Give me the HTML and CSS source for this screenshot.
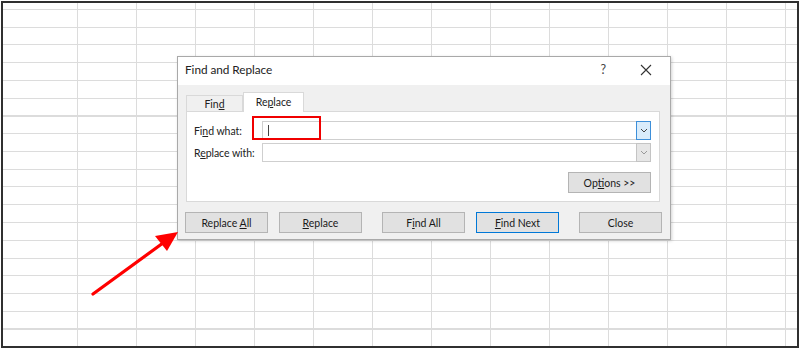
FILE: index.html
```html
<!DOCTYPE html>
<html>
<head>
<meta charset="utf-8">
<link rel="stylesheet" href="styles.css">
</head>
<body>
<div class="sheet">
  <div class="dialog">
    <div class="titlebar">
      <span class="title">Find and Replace</span>
      <span class="help">?</span>
      <svg class="close-x" width="12" height="12" viewBox="0 0 12 12"><path d="M1 1L11 11M11 1L1 11" stroke="#333" stroke-width="1.1" fill="none"/></svg>
    </div>
    <div class="dbody">
      <div class="tabs">
        <div class="tab">Fin<u>d</u></div>
        <div class="tab active">Re<u>p</u>lace</div>
      </div>
      <div class="panel">
        <div class="row">
          <label class="lbl">Fi<u>n</u>d what:</label>
          <div class="combo">
            <div class="field"><span class="caret"></span></div>
            <div class="drop active"><svg width="8" height="5" viewBox="0 0 8 5"><path d="M1 1L4 4L7 1" stroke="#444" stroke-width="1" fill="none"/></svg></div>
          </div>
        </div>
        <div class="row row2">
          <label class="lbl">R<u>e</u>place with:</label>
          <div class="combo">
            <div class="field"></div>
            <div class="drop"><svg width="8" height="5" viewBox="0 0 8 5"><path d="M1 1L4 4L7 1" stroke="#999" stroke-width="1" fill="none"/></svg></div>
          </div>
        </div>
        <div class="optrow">
          <button class="btn">Op<u>t</u>ions &gt;&gt;</button>
        </div>
      </div>
      <div class="buttons">
        <button class="btn">Replace <u>A</u>ll</button>
        <button class="btn gap1"><u>R</u>eplace</button>
        <button class="btn gap2">F<u>i</u>nd All</button>
        <button class="btn gap1 primary"><u>F</u>ind Next</button>
        <button class="btn gap2">Close</button>
      </div>
    </div>
  </div>
  <div class="redbox"></div>
  <svg class="arrow" width="800" height="350" viewBox="0 0 800 350">
    <line x1="93" y1="294" x2="163" y2="243" stroke="#ff0000" stroke-width="3.2" stroke-linecap="round"/>
    <polygon points="178,232 155,236 167,251" fill="#ff0000"/>
  </svg>
</div>
</body>
</html>
```

FILE: styles.css
```css
html, body {
  margin: 0;
  padding: 0;
  background: #fff;
}
body {
  font-family: Lato, "Noto Sans", sans-serif;
  font-size: 10.5px;
  letter-spacing: -0.05px;
  color: #1a1a1a;
}
.sheet {
  position: relative;
  margin: 1px;
  width: 794px;
  height: 343px;
  border: 2px solid #303030;
  background-color: #fff;
  background-image:
    repeating-linear-gradient(to right, #dcdcdc 0 1px, transparent 1px 59px),
    repeating-linear-gradient(to bottom, #dcdcdc 0 1px, transparent 1px 17.75px);
  background-repeat: no-repeat;
  background-position: 74px 0, 0 6px;
  background-size: calc(100% - 74px) 100%, 100% calc(100% - 6px);
  overflow: hidden;
}
.dialog {
  position: absolute;
  left: 174px;
  top: 53px;
  width: 492px;
  height: 182px;
  border: 1px solid #a9a9a9;
  background: #f0f0f0;
  box-shadow: 1px 1px 3px rgba(0,0,0,0.18);
  display: flex;
  flex-direction: column;
}
.titlebar {
  height: 28px;
  box-sizing: border-box;
  padding-bottom: 3px;
  background: #fff;
  display: flex;
  align-items: center;
  padding-left: 7px;
}
.title {
  font-size: 11.8px;
  color: #222;
  flex: 1;
}
.help {
  font-size: 12.5px;
  color: #444;
  margin-right: 34px;
}
.close-x {
  margin-right: 18px;
}
.dbody {
  flex: 1;
  padding: 7px 0 0 8px;
  display: flex;
  flex-direction: column;
}
.tabs {
  display: flex;
  align-items: flex-end;
  height: 19px;
  position: relative;
  z-index: 1;
}
.tab {
  width: 57px;
  height: 16px;
  box-sizing: border-box;
  border: 1px solid #d9d9d9;
  border-bottom: none;
  background: #f0f0f0;
  text-align: center;
  line-height: 16px;
  color: #222;
}
.tab.active {
  width: 61px;
  height: 20px;
  background: #fff;
  margin-bottom: -1px;
  line-height: 18px;
}
.panel {
  width: 474px;
  height: 91px;
  box-sizing: border-box;
  border: 1px solid #d9d9d9;
  background: #fff;
  padding: 9px 8px 0 7px;
  display: flex;
  flex-direction: column;
}
.row {
  display: flex;
  align-items: center;
  height: 19px;
}
.row2 {
  margin-top: 3px;
}
.lbl {
  width: 68px;
  white-space: nowrap;
  color: #222;
}
.combo {
  flex: 1;
  display: flex;
  height: 19px;
  box-sizing: border-box;
  border: 1px solid #cfcfcf;
  background: #fff;
}
.field {
  flex: 1;
  position: relative;
}
.caret {
  position: absolute;
  left: 5px;
  top: 3px;
  width: 1px;
  height: 11px;
  background: #444;
}
.drop {
  width: 15px;
  margin: -1px -1px -1px 0;
  box-sizing: border-box;
  border: 1px solid #c4c4c4;
  background: #e6e6e6;
  display: flex;
  align-items: center;
  justify-content: center;
}
.drop.active {
  border-color: #3d8fd9;
  background: #d9ecfb;
}
.optrow {
  display: flex;
  justify-content: flex-end;
  margin-top: 10px;
}
.btn {
  width: 83px;
  height: 21px;
  box-sizing: border-box;
  border: 1px solid #b4b4b4;
  background: #e1e1e1;
  font-family: inherit;
  font-size: 10.5px;
  color: #1a1a1a;
  padding: 0;
  line-height: 18px;
}
.btn.primary {
  border-color: #0078d7;
}
.buttons {
  display: flex;
  margin-top: 10px;
  margin-left: -1px;
}
.gap1 { margin-left: 11px; }
.gap2 { margin-left: 20px; }
.redbox {
  position: absolute;
  left: 249px;
  top: 113px;
  width: 69px;
  height: 24px;
  box-sizing: border-box;
  border: 2.5px solid #f00000;
}
.arrow {
  position: absolute;
  left: -3px;
  top: -3px;
  pointer-events: none;
}
```
